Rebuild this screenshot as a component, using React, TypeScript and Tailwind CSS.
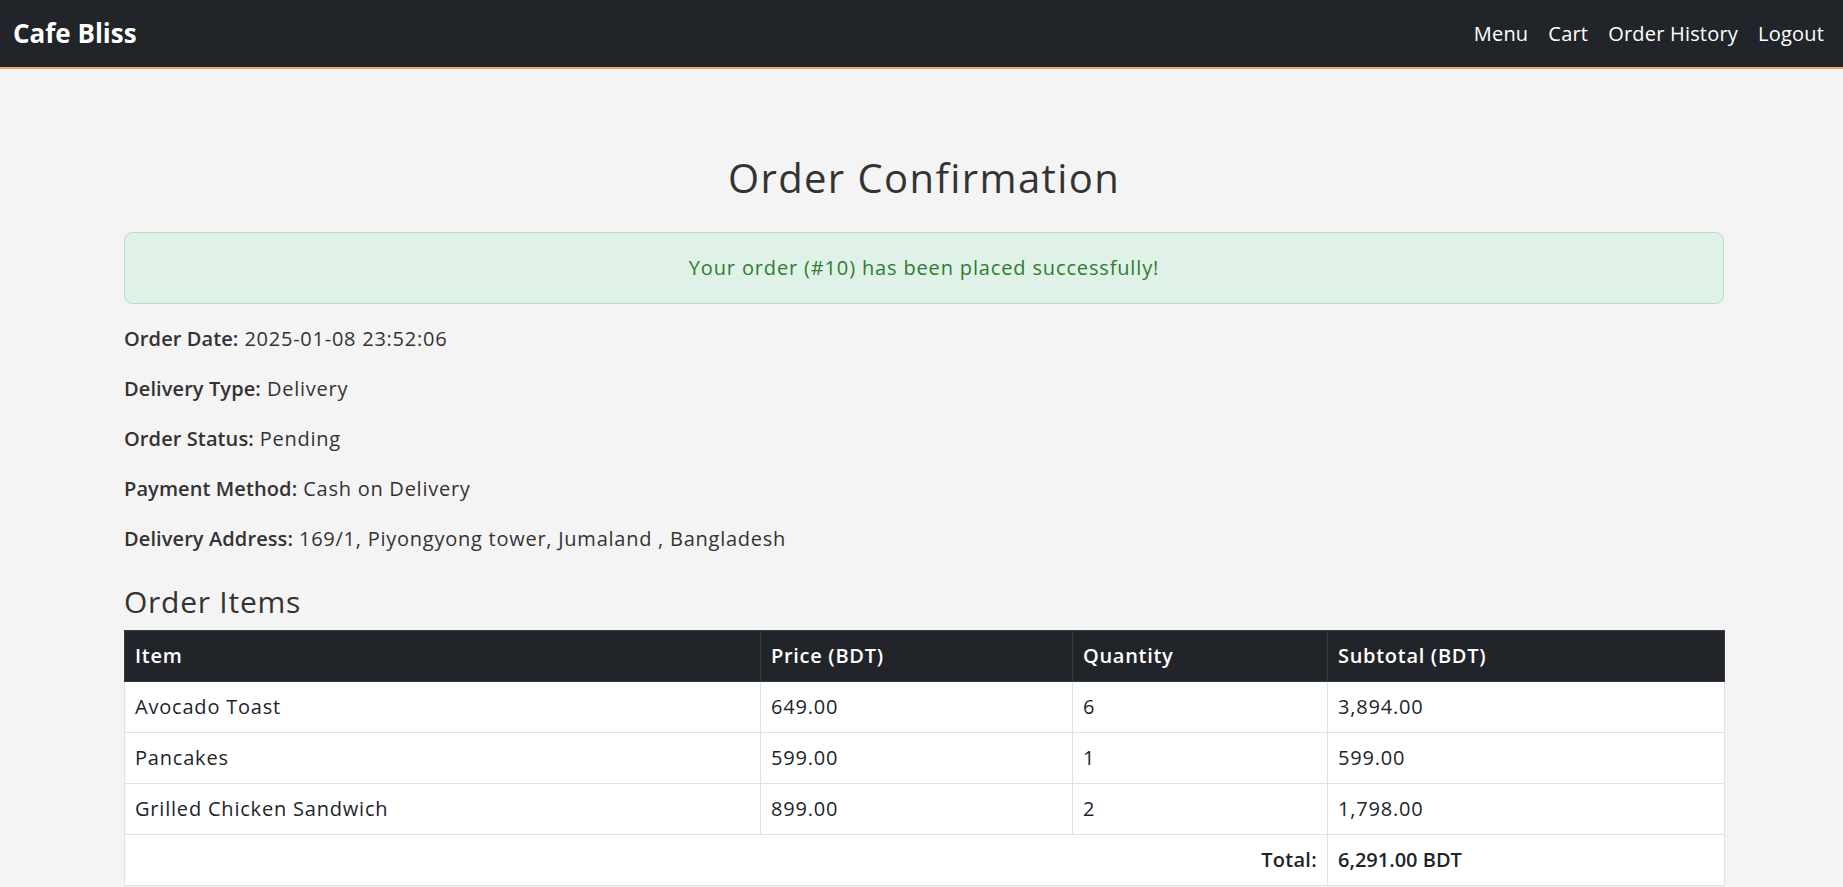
import React from "react";

const items = [
  { name: "Avocado Toast", price: "649.00", qty: 6, subtotal: "3,894.00" },
  { name: "Pancakes", price: "599.00", qty: 1, subtotal: "599.00" },
  { name: "Grilled Chicken Sandwich", price: "899.00", qty: 2, subtotal: "1,798.00" },
];

const details = [
  { label: "Order Date:", value: "2025-01-08 23:52:06" },
  { label: "Delivery Type:", value: "Delivery" },
  { label: "Order Status:", value: "Pending" },
  { label: "Payment Method:", value: "Cash on Delivery" },
  { label: "Delivery Address:", value: "169/1, Piyongyong tower, Jumaland , Bangladesh" },
];

export default function App() {
  return (
    <div className="min-h-screen bg-[#f4f4f4] font-['Open_Sans',sans-serif] text-[#333]">
      {/* Navbar */}
      <nav className="h-[69px] bg-[#212529] border-b-2 border-[#f4a66c] flex items-center justify-between pl-[13px] pr-[9px]">
        <a className="text-[26px] font-bold text-white">Cafe Bliss</a>
        <div className="flex items-center">
          {["Menu", "Cart", "Order History", "Logout"].map((l) => (
            <a key={l} className="px-[10px] text-[20px] tracking-[0.2px] text-white leading-[30px]">
              {l}
            </a>
          ))}
        </div>
      </nav>

      {/* Content */}
      <main className="ml-[124px] w-[1600px] pb-10">
        <h1 className="mt-[85px] mb-[30px] text-center text-[40px] leading-[48px] tracking-[1.4px] font-medium text-[#333]">
          Order Confirmation
        </h1>

        <div className="mb-[20px] rounded-[8px] border border-[#b5e2c3] bg-[#e0f1e7] p-[20px] text-center text-[20px] leading-[30px] tracking-[0.85px] text-[#2e7d32]">
          Your order (#10) has been placed successfully!
        </div>

        {details.map((d) => (
          <p key={d.label} className="mb-[20px] text-[20px] leading-[30px] tracking-[0.75px] text-[#333]">
            <strong className="font-semibold tracking-[0.1px]">{d.label}</strong> {d.value}
          </p>
        ))}

        <h3 className="mt-[30px] mb-[10px] text-[30px] leading-[36px] tracking-[0.75px] font-medium text-[#333]">
          Order Items
        </h3>

        <table className="w-[1600px] table-fixed border-collapse text-[20px] leading-[30px] tracking-[0.8px] text-[#212529]">
          <colgroup>
            <col className="w-[636px]" />
            <col className="w-[312px]" />
            <col className="w-[255px]" />
            <col className="w-[397px]" />
          </colgroup>
          <thead>
            <tr className="bg-[#212529] text-white">
              {["Item", "Price (BDT)", "Quantity", "Subtotal (BDT)"].map((h) => (
                <th
                  key={h}
                  className="h-[51px] border border-[#373b3e] px-[10px] py-[10px] text-left font-semibold tracking-[0.7px]"
                >
                  {h}
                </th>
              ))}
            </tr>
          </thead>
          <tbody className="bg-white">
            {items.map((it) => (
              <tr key={it.name}>
                <td className="h-[51px] border border-[#dee2e6] px-[10px] py-[10px]">{it.name}</td>
                <td className="border border-[#dee2e6] px-[10px] py-[10px]">{it.price}</td>
                <td className="border border-[#dee2e6] px-[10px] py-[10px]">{it.qty}</td>
                <td className="border border-[#dee2e6] px-[10px] py-[10px]">{it.subtotal}</td>
              </tr>
            ))}
            <tr>
              <td
                colSpan={3}
                className="h-[51px] border border-[#dee2e6] px-[10px] py-[10px] text-right font-semibold tracking-[0.3px]"
              >
                Total:
              </td>
              <td className="border border-[#dee2e6] px-[10px] py-[10px] font-semibold tracking-[0px]">
                6,291.00 BDT
              </td>
            </tr>
          </tbody>
        </table>
      </main>
    </div>
  );
}
